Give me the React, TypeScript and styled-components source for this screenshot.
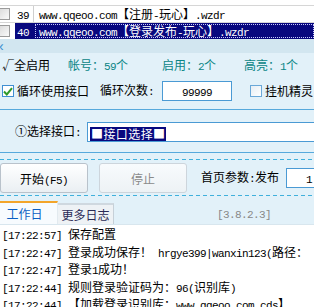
import React from 'react';
import styled, { createGlobalStyle } from 'styled-components';

const GlobalStyle = createGlobalStyle`
  html, body {
    margin: 0;
    padding: 0;
  }
  body {
    width: 314px;
    height: 307px;
    overflow: hidden;
    background: #e2f1f9;
    font-family: "Noto Sans CJK SC", "Liberation Sans", sans-serif;
    font-size: 12px;
    color: #000;
  }
`;

const Asc = styled.span`
  font-family: "Liberation Mono", monospace;
  font-size: 11px;
  letter-spacing: -0.6px;
`;

// ascii runs get the narrow mono font, the rest stays CJK
const Mixed = ({ text }: { text: string }) => (
  <>
    {text.split(/([\x20-\x7e]+)/).map((part, i) =>
      /^[\x20-\x7e]+$/.test(part) ? (
        <Asc key={i}>{part}</Asc>
      ) : part ? (
        <React.Fragment key={i}>{part}</React.Fragment>
      ) : null
    )}
  </>
);

const rows = [
  { no: 39, text: 'www.qqeoo.com【注册-玩心】.wzdr' },
  { no: 40, text: 'www.qqeoo.com【登录发布-玩心】.wzdr', selected: true },
];

const logs = [
  '[17:22:57] 保存配置',
  '[17:22:47] 登录成功保存！ hrgye399|wanxin123(路径： I',
  '[17:22:47] 登录1成功！',
  '[17:22:44] 规则登录验证码为：96(识别库)',
  '[17:22:44] 【加载登录识别库：www.qqeoo.com.cds】',
];

const CheckMark = () => (
  <svg width="10" height="9" viewBox="0 0 10 9">
    <path d="M1 4.5 L3.8 7.5 L9 1.2" fill="none" stroke="#2f9a2a" strokeWidth="2" />
  </svg>
);

const App: React.FC = () => {
  return (
    <Window>
      <GlobalStyle />
      <List>
        {rows.map((r) => (
          <Row key={r.no}>
            <BoxCell>
              <GridBox />
            </BoxCell>
            <NoCell selected={r.selected}>
              <Asc>{r.no}</Asc>
            </NoCell>
            <TextCell selected={r.selected}>
              <Focus selected={r.selected}>
                <Mixed text={r.text} />
              </Focus>
            </TextCell>
          </Row>
        ))}
      </List>
      <HScroll>
        <ScrollArrow>‹</ScrollArrow>
      </HScroll>

      <Panel>
        <StatRow>
          <AllOn>√全启用</AllOn>
          <Stat>
            <Mixed text="帐号：59个" />
          </Stat>
          <Stat>
            <Mixed text="启用：2个" />
          </Stat>
          <Stat>
            <Mixed text="高亮：1个" />
          </Stat>
        </StatRow>
        <LoopRow>
          <CheckLabel>
            <Box checked>
              <CheckMark />
            </Box>
            循环使用接口
          </CheckLabel>
          <Label>
            <Mixed text="循环次数:" />
          </Label>
          <NumInput>
            <Asc>99999</Asc>
          </NumInput>
          <CheckLabel>
            <Box />
            挂机精灵
          </CheckLabel>
        </LoopRow>
      </Panel>
      <Rule />

      <PickRow>
        <Label>
          ①选择接口<Asc>:</Asc>
        </Label>
        <PickInput>
          <Picked>■接口选择■</Picked>
        </PickInput>
      </PickRow>
      <Rule />
      <Dashed top={6} />

      <ButtonRow>
        <Button>
          <Mixed text="开始(F5)" />
        </Button>
        <Button disabled>停止</Button>
        <Label>
          <Mixed text="首页参数:发布" />
        </Label>
        <SmallInput>
          <Asc>1</Asc>
        </SmallInput>
      </ButtonRow>
      <Dashed top={2} />

      <TabBar>
        <Tab active>工作日志</Tab>
        <Tab>更多日志</Tab>
        <Version>
          <Asc>[3.8.2.3]</Asc>
        </Version>
      </TabBar>
      <Log>
        {logs.map((l, i) => (
          <LogLine key={i}>
            <Mixed text={l} />
          </LogLine>
        ))}
      </Log>
    </Window>
  );
};

const Window = styled.div`
  width: 314px;
  height: 307px;
  overflow: hidden;
  display: flex;
  flex-direction: column;
  background: #e2f1f9;
`;

const List = styled.div`
  height: 39px;
  display: flex;
  flex-direction: column;
  justify-content: flex-end;
  overflow: hidden;
  background: #fff;
`;

const Row = styled.div`
  flex: none;
  height: 16px;
  display: flex;
  border-top: 1px solid #d6d6d6;
  white-space: nowrap;
  line-height: 16px;
`;

const BoxCell = styled.div`
  width: 15px;
  flex: none;
  display: flex;
  align-items: center;
`;

const GridBox = styled.span`
  width: 10px;
  height: 12px;
  box-sizing: border-box;
  border: 1px solid #9b9b9b;
  border-left: none;
  background: linear-gradient(135deg, #dcdcdc, #fafafa);
`;

const NoCell = styled.div<{ selected?: boolean }>`
  width: 19px;
  flex: none;
  padding-left: 2px;
  box-sizing: border-box;
  border-right: 1px solid ${(p) => (p.selected ? '#08087e' : '#cfcfcf')};
  background: ${(p) => (p.selected ? '#08087e' : '#fff')};
  color: ${(p) => (p.selected ? '#fff' : '#000')};
`;

const TextCell = styled.div<{ selected?: boolean }>`
  flex: 1;
  padding-left: 1px;
  background: ${(p) => (p.selected ? '#08087e' : '#fff')};
  color: ${(p) => (p.selected ? '#fff' : '#000')};
  overflow: hidden;
`;

const Focus = styled.div<{ selected?: boolean }>`
  height: 14px;
  margin-top: 1px;
  line-height: 14px;
  padding-left: 4px;
  box-sizing: border-box;
  outline: ${(p) => (p.selected ? '1px dotted #c8c8ff' : 'none')};
  outline-offset: -1px;
`;

const HScroll = styled.div`
  height: 14px;
  background: #d2e6f0;
  display: flex;
  align-items: center;
`;

const ScrollArrow = styled.span`
  font-family: "Liberation Sans", sans-serif;
  font-size: 14px;
  line-height: 14px;
  color: #3a8fd0;
  margin-left: -1px;
`;

const Panel = styled.div`
  padding: 3px 0 8px;
  display: flex;
  flex-direction: column;
  gap: 7px;
`;

const StatRow = styled.div`
  display: grid;
  grid-template-columns: 68px 94px 82px 1fr;
  height: 18px;
  line-height: 18px;
  white-space: nowrap;
`;

const AllOn = styled.span`
  padding-left: 2px;
`;

const Stat = styled.span`
  color: #0a8585;
`;

const LoopRow = styled.div`
  display: grid;
  grid-template-columns: 100px 62px 86px 1fr;
  align-items: center;
  height: 20px;
  white-space: nowrap;
`;

const CheckLabel = styled.span`
  display: flex;
  align-items: center;
  gap: 3px;
  padding-left: 2px;
  line-height: 18px;
`;

const Box = styled.span<{ checked?: boolean }>`
  width: 12px;
  height: 12px;
  box-sizing: border-box;
  border: 1px solid ${(p) => (p.checked ? '#3f8fd2' : '#6aa8d8')};
  background: ${(p) => (p.checked ? '#fff' : 'linear-gradient(135deg, #e6eef4, #ffffff)')};
  display: flex;
  align-items: center;
  justify-content: center;
`;

const Label = styled.span`
  line-height: 18px;
  white-space: nowrap;
`;

const NumInput = styled.div`
  width: 70px;
  height: 20px;
  box-sizing: border-box;
  border: 1px solid #4a9ad4;
  background: #fff;
  text-align: center;
  line-height: 18px;
`;

const Rule = styled.div`
  height: 1px;
  background: #56a9dc;
`;

const Dashed = styled.div<{ top: number }>`
  height: 1px;
  margin-top: ${(p) => p.top}px;
  background: repeating-linear-gradient(90deg, #3fb0dc 0 4px, transparent 4px 7px);
`;

const PickRow = styled.div`
  height: 42px;
  box-sizing: border-box;
  padding: 12px 0 0 15px;
  display: flex;
  gap: 6px;
  white-space: nowrap;
  overflow: hidden;
`;

const PickInput = styled.div`
  flex: none;
  width: 260px;
  height: 20px;
  box-sizing: border-box;
  border: 1px solid #4a9ad4;
  background: #fff;
  padding: 2px 0 0 2px;
`;

const Picked = styled.span`
  display: inline-block;
  background: #08087e;
  color: #fff;
  line-height: 14px;
  height: 14px;
  padding: 0 1px;
  letter-spacing: 0.4px;
`;

const ButtonRow = styled.div`
  margin-top: 3px;
  height: 30px;
  display: flex;
  align-items: center;
  white-space: nowrap;
  overflow: hidden;
`;

const Button = styled.button`
  flex: none;
  width: 88px;
  height: 30px;
  margin-right: 11px;
  padding: 0;
  border: 1px solid #b9c2cb;
  border-radius: 3px;
  background: linear-gradient(#ffffff, #eaeff3);
  font-family: "Noto Sans CJK SC", sans-serif;
  font-size: 12px;
  color: #000;
  &:disabled {
    color: #8a8a8a;
    border-color: #cdd5dc;
    background: linear-gradient(#f8fbfd, #edf2f5);
  }
  &:last-of-type {
    margin-right: 14px;
  }
`;

const SmallInput = styled.div`
  flex: none;
  width: 46px;
  height: 20px;
  margin-left: 7px;
  box-sizing: border-box;
  border: 1px solid #4a9ad4;
  background: #fff;
  text-align: center;
  line-height: 18px;
`;

const TabBar = styled.div`
  margin-top: 5px;
  height: 23px;
  display: flex;
  align-items: flex-end;
`;

const Tab = styled.div<{ active?: boolean }>`
  height: ${(p) => (p.active ? 23 : 21)}px;
  box-sizing: border-box;
  padding: 0 ${(p) => (p.active ? '9px 0 1px' : '3px')};
  border-top: 2px solid ${(p) => (p.active ? '#f3a52a' : '#cfd8df')};
  border-right: 1px solid ${(p) => (p.active ? '#e2eaef' : '#c6d0d8')};
  background: ${(p) => (p.active ? '#f7fbfe' : '#eef2f5')};
  color: ${(p) => (p.active ? '#0b5fc4' : '#2a2a55')};
  font-size: 12px;
  line-height: ${(p) => (p.active ? 21 : 19)}px;
  width: ${(p) => (p.active ? 58 : 56)}px;
  text-align: center;
`;

const Version = styled.div`
  margin-left: 103px;
  align-self: center;
  color: #888;
`;

const Log = styled.div`
  flex: 1;
  background: #fff;
  border-top: 1px solid #d8e6ee;
  padding: 0 0 0 2px;
  overflow: hidden;
`;

const LogLine = styled.div`
  height: 17.5px;
  line-height: 17.5px;
  white-space: nowrap;
`;

export default App;
